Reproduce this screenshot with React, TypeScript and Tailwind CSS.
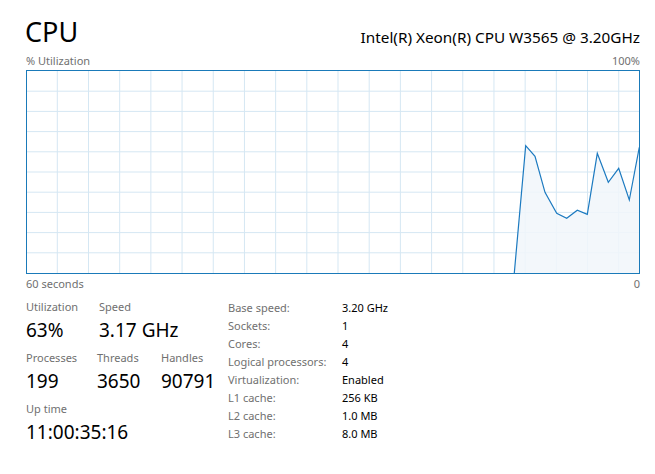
import React from 'react'

const font = { fontFamily: '"Segoe UI", "Noto Sans", "Open Sans", sans-serif' }

// usage samples, chart-relative coordinates (612x202 inner area)
const points: [number, number][] = [
  [487.3, 202],
  [498.7, 74.7],
  [508, 85.3],
  [518, 121.3],
  [529.7, 142.3],
  [539.7, 147.3],
  [550.3, 139.3],
  [560.3, 143.3],
  [570.3, 82.3],
  [581.3, 111.3],
  [591.7, 97.3],
  [602.3, 129],
  [612.3, 76.3],
]

const specs: [string, string][] = [
  ['Base speed:', '3.20 GHz'],
  ['Sockets:', '1'],
  ['Cores:', '4'],
  ['Logical processors:', '4'],
  ['Virtualization:', 'Enabled'],
  ['L1 cache:', '256 KB'],
  ['L2 cache:', '1.0 MB'],
  ['L3 cache:', '8.0 MB'],
]

function UsageChart() {
  const vLines = Array.from({ length: 19 }, (_, i) => 30.3 + i * 31.19)
  const hLines = Array.from({ length: 9 }, (_, i) => 20.2 * (i + 1))
  const line = points.map(p => p.join(',')).join(' ')
  const area = `${line} 612,202 487.3,202`

  return (
    <div className="w-[614px] h-[204px] border border-[#1a7ab9] bg-white">
      <svg width="612" height="202" viewBox="0 0 612 202" className="block">
        {vLines.map(x => (
          <line key={'v' + x} x1={x} y1={0} x2={x} y2={202} stroke="#d5e7f3" strokeWidth={1} />
        ))}
        {hLines.map(y => (
          <line key={'h' + y} x1={0} y1={y} x2={612} y2={y} stroke="#d5e7f3" strokeWidth={1} />
        ))}
        <polygon points={area} fill="#f1f6fa" fillOpacity={0.85} />
        <polyline points={line} fill="none" stroke="#1c7ac0" strokeWidth={1.2} />
      </svg>
    </div>
  )
}

function Stat({ label, value, className = '' }: { label: string; value: string; className?: string }) {
  return (
    <div className={'flex flex-col ' + className}>
      <span className="text-[11px] leading-[16px] text-[#707070]">{label}</span>
      <span className="text-[19px] leading-[24px] text-black mt-[3px]">{value}</span>
    </div>
  )
}

export default function App() {
  return (
    <div className="w-[655px] h-[474px] bg-white pl-[25px] pr-[15px] pt-[14px]" style={font}>
      {/* header */}
      <div className="flex items-end justify-between">
        <span className="text-[27px] leading-[36px] text-black">CPU</span>
        <span className="text-[15.3px] leading-[22px] text-black mb-[2px]">Intel(R) Xeon(R) CPU W3565 @ 3.20GHz</span>
      </div>

      <div className="flex justify-between pl-[1px] text-[11px] leading-[15px] text-[#707070] mt-[3px]">
        <span>% Utilization</span>
        <span>100%</span>
      </div>

      <div className="pl-[1px] mt-[2px]">
        <UsageChart />
      </div>

      <div className="flex justify-between pl-[1px] text-[11px] leading-[15px] text-[#707070] mt-[2px]">
        <span>60 seconds</span>
        <span>0</span>
      </div>

      {/* stats */}
      <div className="flex pl-[1px] mt-[8px]">
        <div className="w-[202px] flex flex-col gap-[8px]">
          <div className="flex">
            <Stat label="Utilization" value="63%" className="w-[73px]" />
            <Stat label="Speed" value="3.17 GHz" />
          </div>
          <div className="flex">
            <Stat label="Processes" value="199" className="w-[71px]" />
            <Stat label="Threads" value="3650" className="w-[64px]" />
            <Stat label="Handles" value="90791" />
          </div>
          <div className="flex">
            <Stat label="Up time" value="11:00:35:16" />
          </div>
        </div>

        <div className="flex flex-col text-[11px]">
          {specs.map(([k, v]) => (
            <div key={k} className="flex h-[18px] items-center">
              <span className="w-[114px] text-[#707070]">{k}</span>
              <span className="text-black">{v}</span>
            </div>
          ))}
        </div>
      </div>
    </div>
  )
}
